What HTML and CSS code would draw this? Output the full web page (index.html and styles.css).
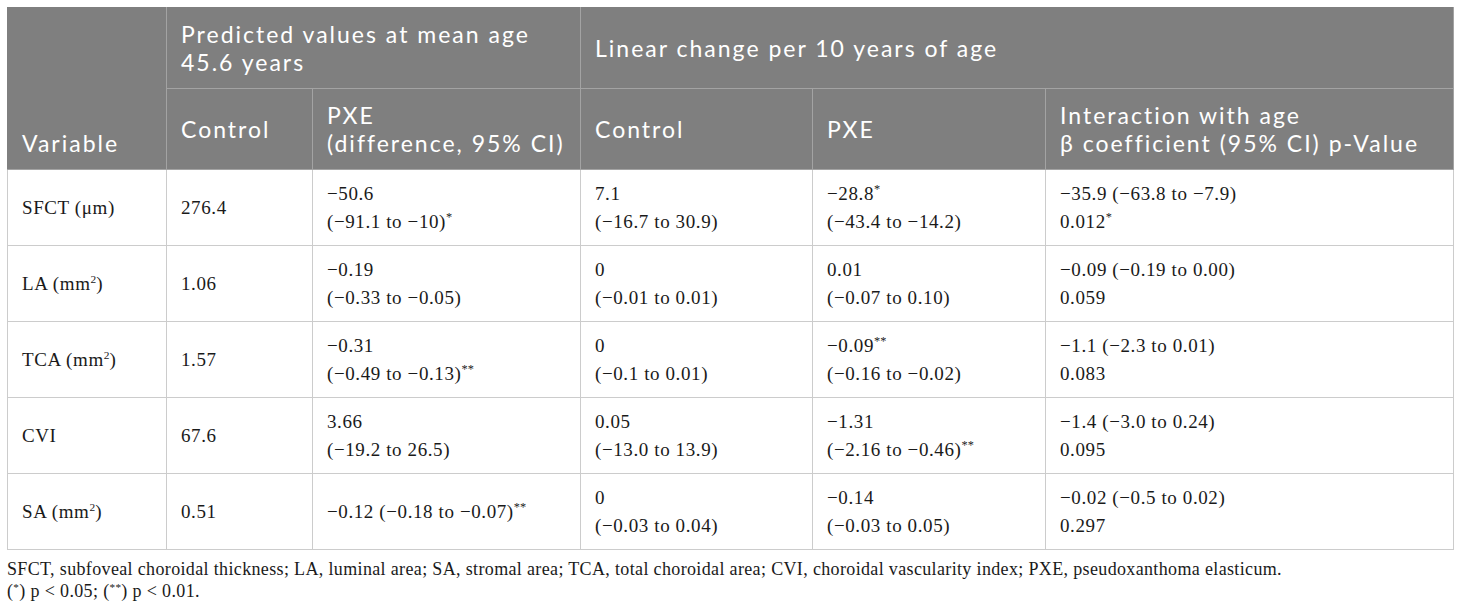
FILE: index.html
```html
<!DOCTYPE html>
<html lang="en">
<head>
<meta charset="utf-8">
<title>Choroidal parameters table</title>
<link rel="stylesheet" href="styles.css">
</head>
<body>
<div class="wrap">
  <table class="data">
    <colgroup>
      <col class="c-var">
      <col class="c-ctrl1">
      <col class="c-pxe1">
      <col class="c-ctrl2">
      <col class="c-pxe2">
      <col class="c-int">
    </colgroup>
    <thead>
      <tr class="hrow">
        <th rowspan="2" class="h-var">Variable</th>
        <th colspan="2">Predicted values at mean age 45.6 years</th>
        <th colspan="3">Linear change per 10 years of age</th>
      </tr>
      <tr class="hrow">
        <th>Control</th>
        <th>PXE<br>(difference, 95% CI)</th>
        <th>Control</th>
        <th>PXE</th>
        <th>Interaction with age<br>β coefficient (95% CI) p-Value</th>
      </tr>
    </thead>
    <tbody>
      <tr>
        <td>SFCT (μm)</td>
        <td>276.4</td>
        <td>−50.6<br>(−91.1 to −10)<sup>*</sup></td>
        <td>7.1<br>(−16.7 to 30.9)</td>
        <td>−28.8<sup>*</sup><br>(−43.4 to −14.2)</td>
        <td>−35.9 (−63.8 to −7.9)<br>0.012<sup>*</sup></td>
      </tr>
      <tr>
        <td>LA (mm<sup class="pw">2</sup>)</td>
        <td>1.06</td>
        <td>−0.19<br>(−0.33 to −0.05)</td>
        <td>0<br>(−0.01 to 0.01)</td>
        <td>0.01<br>(−0.07 to 0.10)</td>
        <td>−0.09 (−0.19 to 0.00)<br>0.059</td>
      </tr>
      <tr>
        <td>TCA (mm<sup class="pw">2</sup>)</td>
        <td>1.57</td>
        <td>−0.31<br>(−0.49 to −0.13)<sup>**</sup></td>
        <td>0<br>(−0.1 to 0.01)</td>
        <td>−0.09<sup>**</sup><br>(−0.16 to −0.02)</td>
        <td>−1.1 (−2.3 to 0.01)<br>0.083</td>
      </tr>
      <tr>
        <td>CVI</td>
        <td>67.6</td>
        <td>3.66<br>(−19.2 to 26.5)</td>
        <td>0.05<br>(−13.0 to 13.9)</td>
        <td>−1.31<br>(−2.16 to −0.46)<sup>**</sup></td>
        <td>−1.4 (−3.0 to 0.24)<br>0.095</td>
      </tr>
      <tr>
        <td>SA (mm<sup class="pw">2</sup>)</td>
        <td>0.51</td>
        <td>−0.12 (−0.18 to −0.07)<sup>**</sup></td>
        <td>0<br>(−0.03 to 0.04)</td>
        <td>−0.14<br>(−0.03 to 0.05)</td>
        <td>−0.02 (−0.5 to 0.02)<br>0.297</td>
      </tr>
    </tbody>
  </table>
  <div class="notes">
    <p>SFCT, subfoveal choroidal thickness; LA, luminal area; SA, stromal area; TCA, total choroidal area; CVI, choroidal vascularity index; PXE, pseudoxanthoma elasticum.</p>
    <p>(<sup>*</sup>) p &lt; 0.05; (<sup>**</sup>) p &lt; 0.01.</p>
  </div>
</div>
</body>
</html>
```

FILE: styles.css
```css
html, body {
  margin: 0;
  padding: 0;
  background: #ffffff;
}

.wrap {
  padding: 7px 7px 0 7px;
}

.data {
  width: 1446px;
  border-collapse: collapse;
  table-layout: fixed;
  font-family: "Liberation Serif", "Times New Roman", serif;
  color: #1a1a1a;
}

.c-var { width: 159px; }
.c-ctrl1 { width: 146px; }
.c-pxe1 { width: 268px; }
.c-ctrl2 { width: 232px; }
.c-pxe2 { width: 233px; }
.c-int { width: 408px; }

.data th {
  background: #7f7f7f;
  color: #ffffff;
  font-family: Lato, "Noto Sans", sans-serif;
  font-weight: 400;
  font-size: 23px;
  line-height: 28px;
  letter-spacing: 2px;
  text-align: left;
  vertical-align: middle;
  padding: 0 14px;
  border: 1px solid #a3a3a3;
  border-top-color: #7f7f7f;
}

.data thead tr:first-child th {
  border-left-color: #7f7f7f;
}

.data thead tr:first-child th + th {
  border-left-color: #a3a3a3;
}

.hrow {
  height: 81px;
}

.data th.h-var {
  vertical-align: bottom;
  padding-bottom: 12px;
  border-left-color: #7f7f7f;
}

.data td {
  height: 75px;
  font-size: 19px;
  line-height: 28px;
  letter-spacing: 0.6px;
  padding: 0 14px;
  vertical-align: middle;
  border: 1px solid #cccccc;
  white-space: nowrap;
}

.data sup {
  font-size: 0.65em;
  line-height: 0;
  vertical-align: 0.6em;
  letter-spacing: 0;
}

.data sup.pw {
  font-size: 0.6em;
  vertical-align: 0.6em;
}

.notes {
  padding-top: 8px;
  font-family: "Liberation Serif", "Times New Roman", serif;
  font-size: 18px;
  line-height: 22px;
  letter-spacing: 0.35px;
  color: #1a1a1a;
}

.notes p {
  margin: 0;
}

.notes sup {
  font-size: 0.62em;
  line-height: 0;
  vertical-align: 0.5em;
}
```
